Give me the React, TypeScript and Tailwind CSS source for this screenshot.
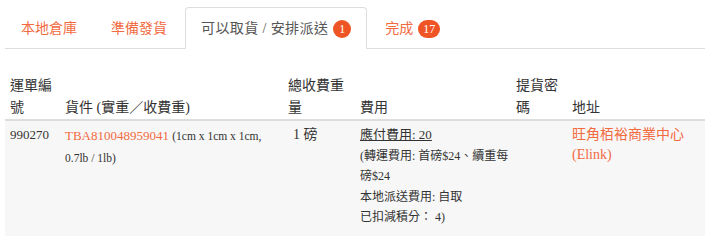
import React from "react";

const font = { fontFamily: '"Liberation Serif", "Noto Sans CJK TC", serif' };

function Badge({ n }: { n: string }) {
  return (
    <span className="ml-[5px] inline-flex h-[18px] min-w-[18px] items-center justify-center rounded-full bg-[#ee5424] px-[5px] text-[12px] leading-none text-white">
      {n}
    </span>
  );
}

export default function App() {
  return (
    <div className="bg-white pt-[7px] pl-[5px] text-[#333]" style={font}>
      <ul className="flex border-b border-[#ddd]">
        <li className="mr-[2px] -mb-px">
          <span className="flex items-center border border-transparent px-[15px] pt-[11px] pb-[9px] text-[14px] leading-[20px] text-[#f26a3f]">本地倉庫</span>
        </li>
        <li className="mr-[2px] -mb-px">
          <span className="flex items-center border border-transparent px-[15px] pt-[11px] pb-[9px] text-[14px] leading-[20px] text-[#f26a3f]">準備發貨</span>
        </li>
        <li className="mr-[2px] -mb-px">
          <span className="flex items-center rounded-t-[4px] border border-[#ddd] border-b-white bg-white px-[15px] pt-[11px] pb-[9px] text-[14px] leading-[20px] text-[#555]">
            <span className="tracking-[0.4px]">可以取貨 / 安排派送</span>
            <Badge n="1" />
          </span>
        </li>
        <li className="mr-[2px] -mb-px">
          <span className="flex items-center border border-transparent px-[15px] pt-[11px] pb-[9px] text-[14px] leading-[20px] text-[#f26a3f]">
            完成<Badge n="17" />
          </span>
        </li>
      </ul>

      <table className="mt-[24px] w-[700px] table-fixed border-collapse text-left">
        <colgroup>
          <col className="w-[55px]" />
          <col className="w-[223px]" />
          <col className="w-[72px]" />
          <col className="w-[156px]" />
          <col className="w-[56px]" />
          <col />
        </colgroup>
        <thead>
          <tr className="border-b-2 border-[#ddd]">
            <th className="px-[5px] pt-[2px] pb-0 align-bottom text-[14px] font-normal leading-[22px]">運單編號</th>
            <th className="px-[5px] pt-[2px] pb-0 align-bottom text-[14px] font-normal leading-[22px]">貨件 (實重／收費重)</th>
            <th className="px-[5px] pt-[2px] pb-0 align-bottom text-[14px] font-normal leading-[22px]">總收費重量</th>
            <th className="px-[5px] pt-[2px] pb-0 align-bottom text-[14px] font-normal leading-[22px]">費用</th>
            <th className="px-[5px] pt-[2px] pb-0 align-bottom text-[14px] font-normal leading-[22px]">提貨密碼</th>
            <th className="px-[5px] pt-[2px] pb-0 align-bottom text-[14px] font-normal leading-[22px]">地址</th>
          </tr>
        </thead>
        <tbody>
          <tr className="bg-[#f7f7f7]">
            <td className="px-[5px] pt-[4px] pb-[8px] align-top text-[13px] leading-[20px]">990270</td>
            <td className="px-[5px] pt-[4px] pb-[8px] align-top text-[13px] leading-[22px]">
              <span className="text-[#f26a3f]">TBA810048959041</span>{" "}
              <span className="text-[11.5px]">(1cm x 1cm x 1cm, 0.7lb / 1lb)</span>
            </td>
            <td className="pl-[10px] pr-[5px] pt-[4px] pb-[8px] align-top text-[14px] leading-[20px]">1 磅</td>
            <td className="pl-[5px] pr-0 pt-[4px] pb-[8px] align-top text-[12px] leading-[20.5px]">
              <div className="text-[13px] underline">應付費用: 20</div>
              <div>(轉運費用: 首磅$24、續重每磅$24</div>
              <div>本地派送費用: 自取</div>
              <div>已扣減積分： 4)</div>
            </td>
            <td className="px-[5px] pt-[4px] pb-[8px] align-top"></td>
            <td className="px-[5px] pt-[4px] pb-[8px] align-top text-[14px] leading-[20px] text-[#f26a3f]">
              旺角栢裕商業中心 (Elink)
            </td>
          </tr>
        </tbody>
      </table>
    </div>
  );
}
